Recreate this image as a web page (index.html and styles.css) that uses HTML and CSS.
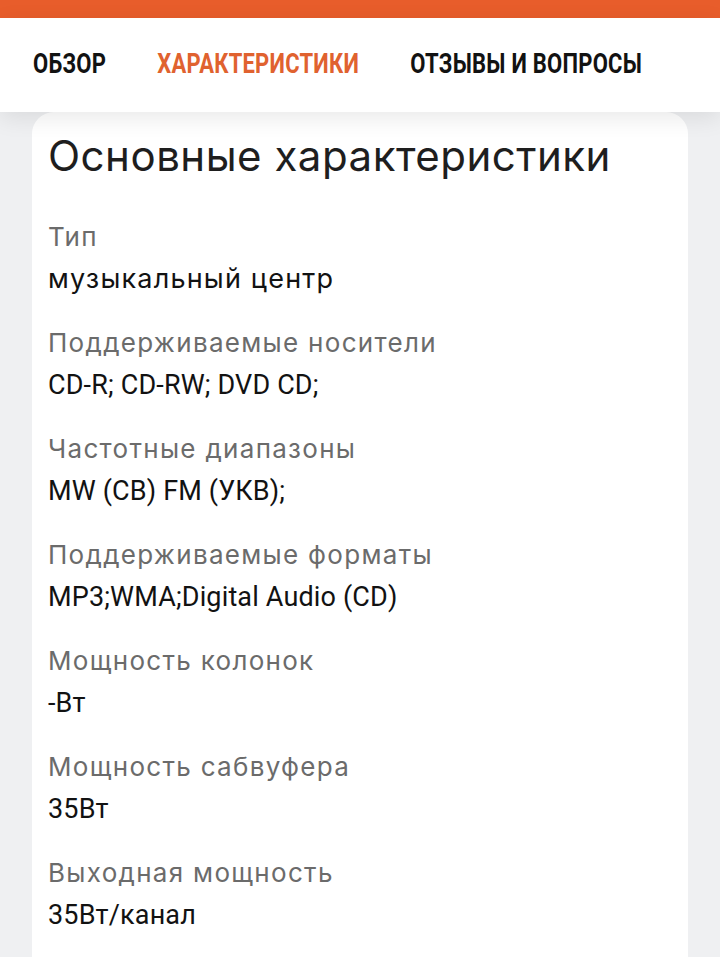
FILE: index.html
```html
<!DOCTYPE html>
<html lang="ru">
<head>
<meta charset="utf-8">
<link rel="stylesheet" href="styles.css">
</head>
<body>
<div class="topbar"></div>
<nav class="tabs">
  <div class="tabs-inner">
    <a class="tab">ОБЗОР</a>
    <a class="tab active">ХАРАКТЕРИСТИКИ</a>
    <a class="tab">ОТЗЫВЫ И ВОПРОСЫ</a>
  </div>
</nav>
<main class="page">
  <section class="card">
    <h1 class="title">Основные характеристики</h1>
    <dl class="specs">
      <div class="row"><dt>Тип</dt><dd>музыкальный центр</dd></div>
      <div class="row"><dt>Поддерживаемые носители</dt><dd class="narrow">CD-R; CD-RW; DVD CD;</dd></div>
      <div class="row"><dt>Частотные диапазоны</dt><dd class="narrow">MW (СВ) FM (УКВ);</dd></div>
      <div class="row"><dt>Поддерживаемые форматы</dt><dd class="narrow">MP3;WMA;Digital Audio (CD)</dd></div>
      <div class="row"><dt>Мощность колонок</dt><dd class="narrow">-Вт</dd></div>
      <div class="row"><dt>Мощность сабвуфера</dt><dd class="narrow">35Вт</dd></div>
      <div class="row"><dt>Выходная мощность</dt><dd class="narrow">35Вт/канал</dd></div>
    </dl>
  </section>
</main>
</body>
</html>
```
FILE: styles.css
```css
html, body {
  margin: 0;
  padding: 0;
}
body {
  background: #eff0f2;
  font-family: Inter, "Noto Sans", sans-serif;
  color: #161616;
  width: 720px;
  height: 957px;
  overflow: hidden;
}
.topbar {
  height: 18px;
  background: #e85d2b;
}
.tabs {
  position: relative;
  z-index: 2;
  height: 94px;
  background: #fff;
  display: flex;
  align-items: center;
  padding-left: 33px;
  box-shadow: 0 6px 22px rgba(0, 0, 0, 0.09);
}
.tabs-inner {
  display: flex;
  gap: 64px;
  white-space: nowrap;
  transform: scaleX(0.8);
  transform-origin: left center;
}
.tab {
  font-family: Roboto, "Liberation Sans", sans-serif;
  font-weight: 700;
  font-size: 27.5px;
  line-height: 32px;
  letter-spacing: 0.3px;
  color: #121212;
  padding-bottom: 2px;
}
.tab.active {
  color: #e0622f;
}
.page {
  padding: 0 32px;
}
.card {
  box-sizing: border-box;
  background: #fff;
  border-radius: 22px 22px 0 0;
  padding: 16px 16px 0;
  height: 845px;
  overflow: hidden;
}
.title {
  margin: 0 0 32px;
  font-weight: 400;
  font-size: 42px;
  line-height: 56px;
  letter-spacing: 0.5px;
  color: #1e1e1e;
}
.specs {
  margin: 0;
}
.row {
  margin-bottom: 22px;
}
.row:last-child {
  margin-bottom: 0;
}
dt {
  font-size: 26px;
  line-height: 42px;
  letter-spacing: 1.3px;
  color: #6b6b6b;
}
dd {
  margin: 0;
  font-size: 27px;
  line-height: 42px;
  letter-spacing: 1.2px;
  color: #121212;
}
dd.narrow {
  font-family: Roboto, "Liberation Sans", sans-serif;
  letter-spacing: 0.15px;
}
```
